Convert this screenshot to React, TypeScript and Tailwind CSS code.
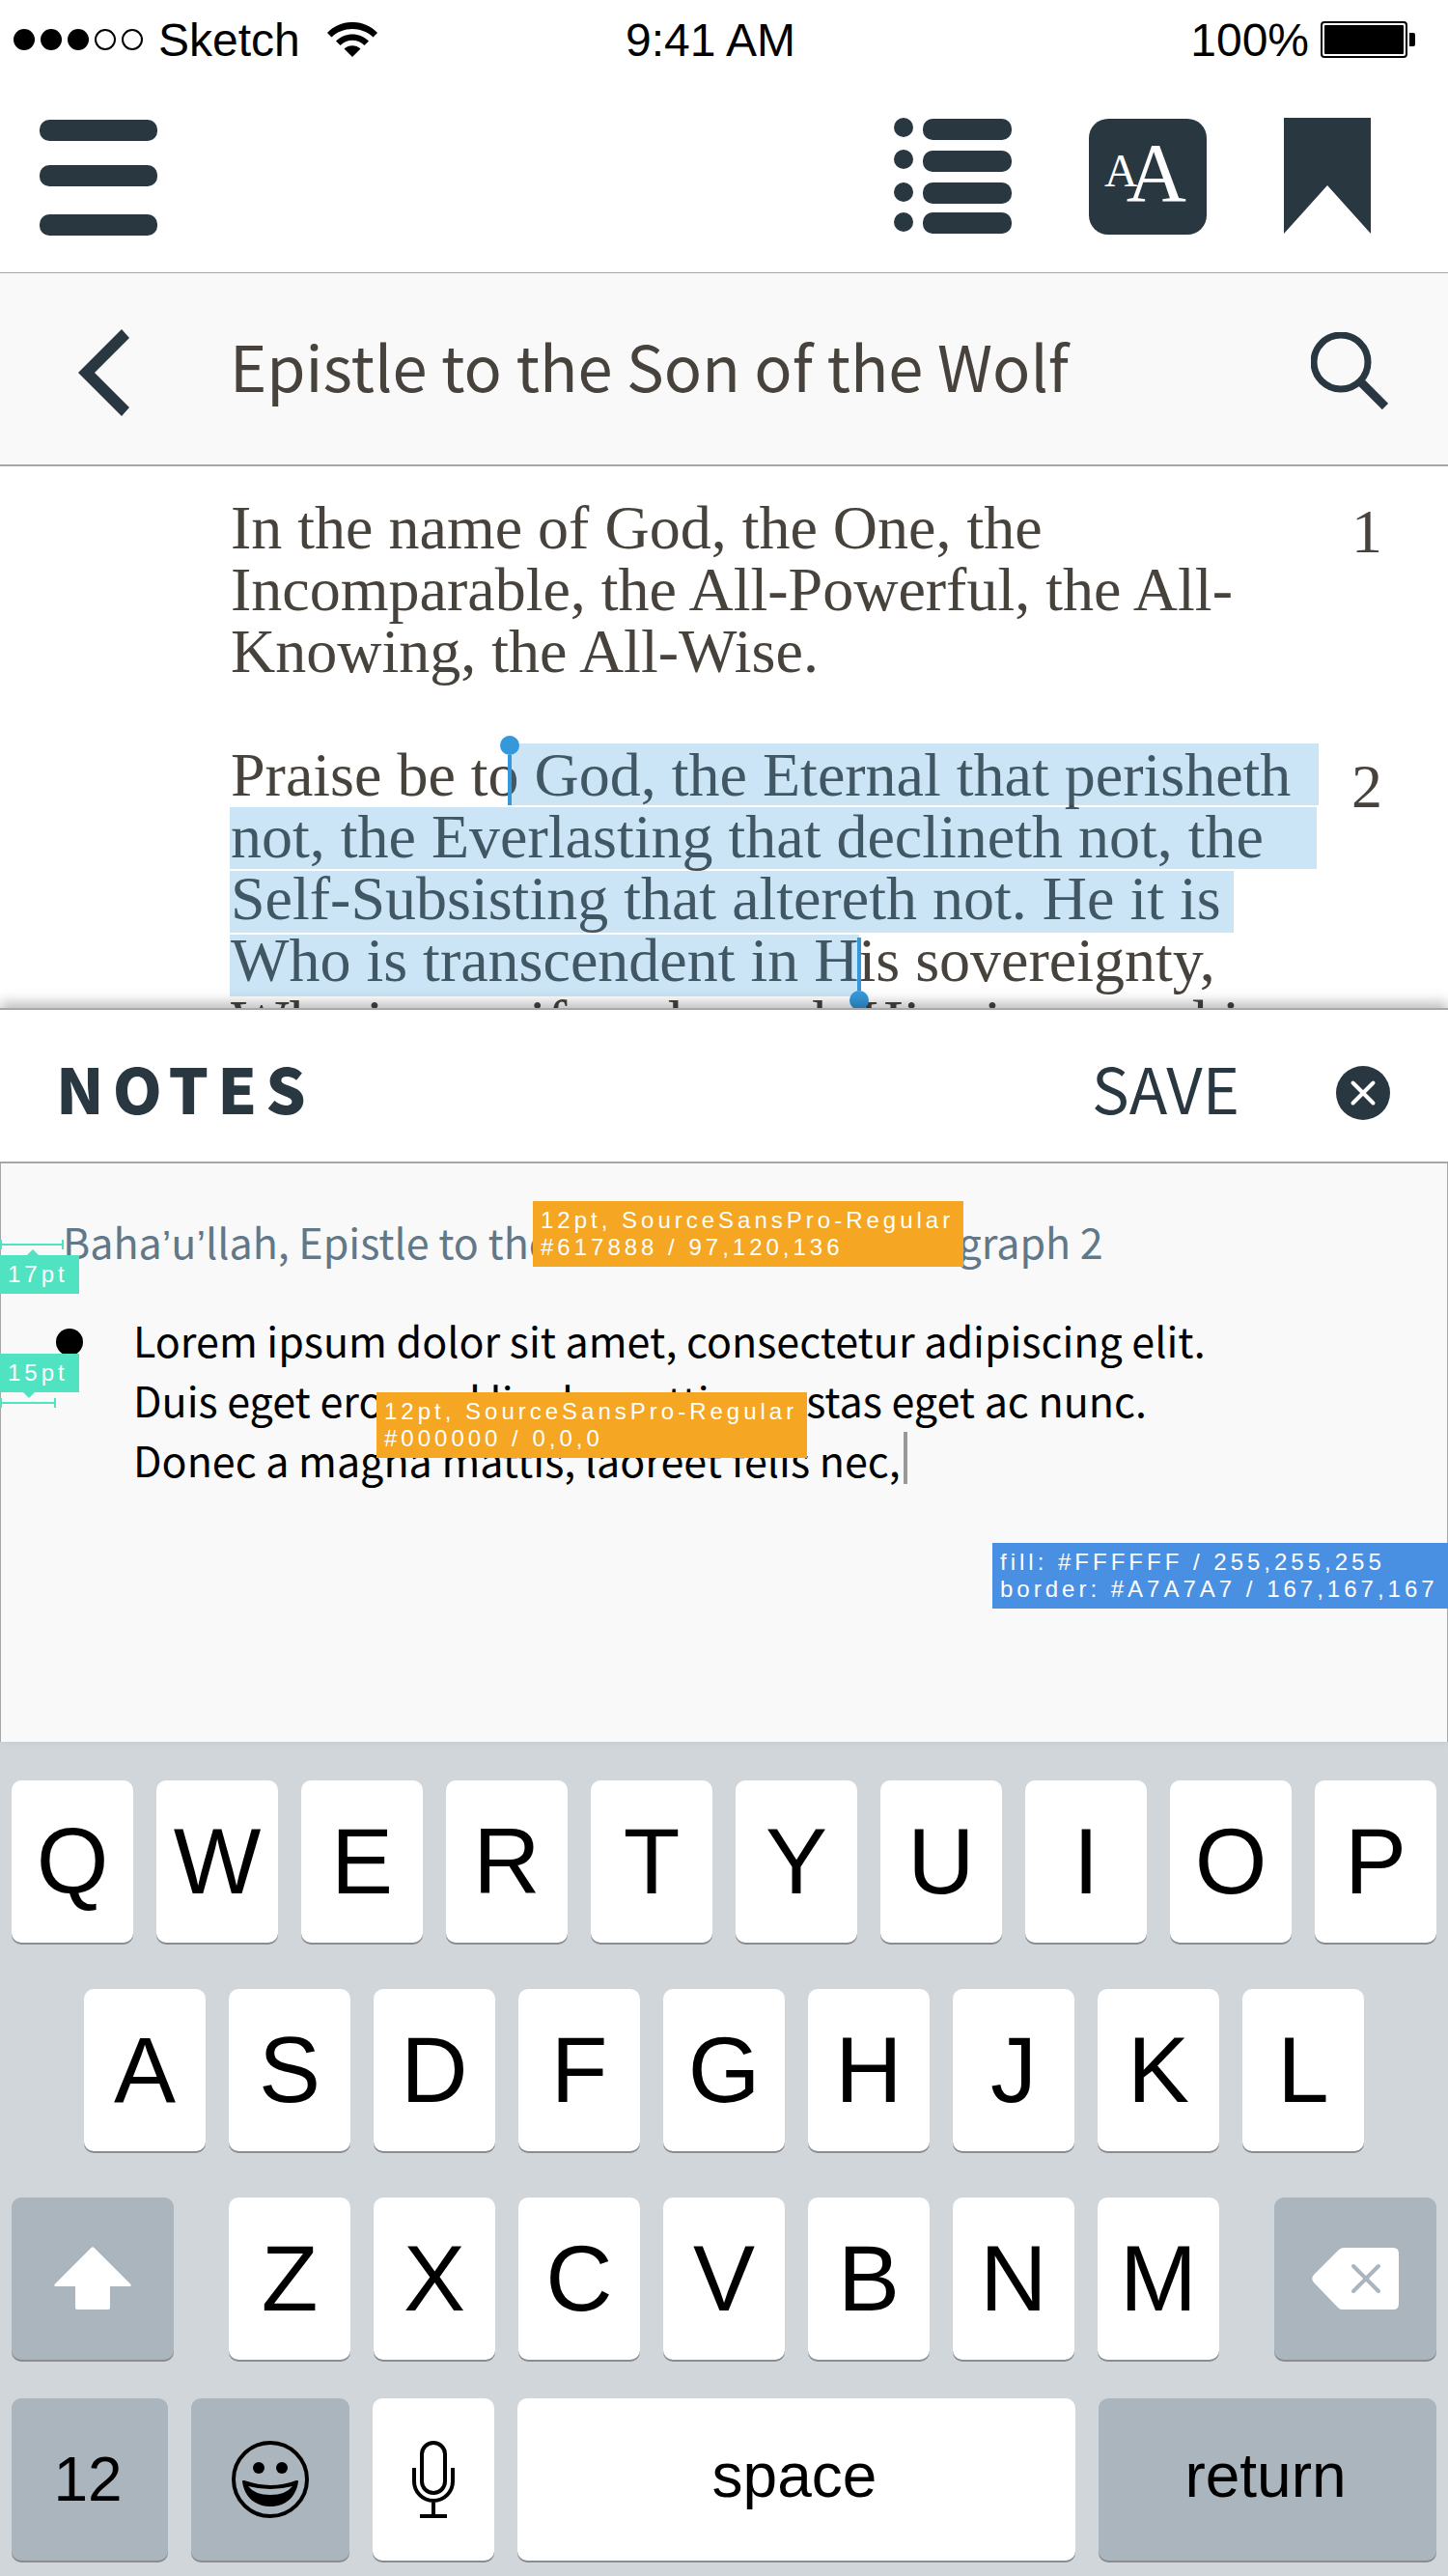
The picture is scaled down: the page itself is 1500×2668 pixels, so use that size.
import type { ReactNode } from "react";

const INK = "#293740";
const SANS = "font-['Liberation_Sans',Arial,sans-serif]";
const SOURCE = "font-['Noto_Sans_CJK_SC','Source_Sans_Pro',sans-serif]";
const SERIF = "font-['Liberation_Serif',serif]";

function StatusBar() {
  return (
    <div className={`${SANS} grid h-[82px] grid-cols-3 items-center pr-[34px] pl-[14px] text-[48px] leading-[56px] text-black`}>
      <div className="flex items-center">
        <svg width="134" height="22" viewBox="0 0 134 22" aria-label="Signal strength">
          <circle cx="11" cy="11" r="11" />
          <circle cx="39" cy="11" r="11" />
          <circle cx="67" cy="11" r="11" />
          <circle cx="95" cy="11" r="10" fill="none" stroke="#000" strokeWidth="2" />
          <circle cx="123" cy="11" r="10" fill="none" stroke="#000" strokeWidth="2" />
        </svg>
        <span className="ml-4 pt-[2px]">Sketch</span>
        <svg className="ml-7" width="52" height="36" viewBox="0 0 52 36" aria-label="Wi-Fi">
          <path d="M0 11C14-3.700 38-3.700 52 11L47.500 15.500C36 4 16 4 4.500 15.500Z" />
          <path d="M9 19.500C18.500 10 33.500 10 43 19.500L38.500 24C31.500 17 20.500 17 13.500 24Z" />
          <path d="M17.500 27.500C22 23 30 23 34.500 27.500L26 36Z" />
        </svg>
      </div>
      <div className="pt-[2px] pr-2 text-center">9:41 AM</div>
      <div className="flex items-center justify-end gap-3">
        <span className="pt-[2px]">100%</span>
        <svg width="98" height="38" viewBox="0 0 98 38" aria-label="Battery">
          <rect x="1" y="1" width="88" height="36" rx="3" fill="none" stroke="#000" strokeWidth="2" />
          <rect x="4" y="4" width="82" height="30" rx="1" />
          <path d="M92 12h4q2 0 2 2v10q0 2-2 2h-4z" />
        </svg>
      </div>
    </div>
  );
}

function NavBar() {
  return (
    <nav className="flex h-[201px] items-center border-b border-[#a7a7a7] pr-20 pl-[41px]">
      <button aria-label="Menu" className="mr-auto pt-1">
        <svg width="122" height="120" viewBox="0 0 122 120" fill={INK}>
          <rect y="0" width="122" height="22" rx="10" />
          <rect y="47" width="122" height="22" rx="10" />
          <rect y="98" width="122" height="22" rx="10" />
        </svg>
      </button>
      <div className="flex items-center gap-20">
        <button aria-label="Contents">
          <svg width="122" height="120" viewBox="0 0 122 120" fill={INK}>
            <circle cx="10" cy="10" r="10" />
            <circle cx="10" cy="43" r="10" />
            <circle cx="10" cy="77" r="10" />
            <circle cx="10" cy="108" r="10" />
            <rect x="30" y="1" width="92" height="22" rx="10" />
            <rect x="30" y="34" width="92" height="22" rx="10" />
            <rect x="30" y="67" width="92" height="22" rx="10" />
            <rect x="30" y="98" width="92" height="22" rx="10" />
          </svg>
        </button>
        <button
          aria-label="Text size"
          className={`${SERIF} mt-[2px] flex h-[120px] w-[122px] items-center rounded-[20px] bg-[#293740] pb-2 pl-4 text-white`}
        >
          <span className="pb-1 text-[48px] leading-none">A</span>
          <span className="-ml-3 text-[86px] leading-none">A</span>
        </button>
        <button aria-label="Bookmark">
          <svg width="90" height="120" viewBox="0 0 90 120" fill={INK}>
            <path d="M0 0H90V120L45 70L0 120Z" />
          </svg>
        </button>
      </div>
    </nav>
  );
}

function TitleBar() {
  return (
    <header className="flex h-[200px] items-center border-b-2 border-[#a7a7a7] bg-[#f9f9f9] pr-[62px] pl-[81px]">
      <button aria-label="Back" className="pt-2">
        <svg width="53" height="90" viewBox="0 0 53 90" fill={INK}>
          <path d="M45 0L53 9L17 45L53 81L45 90L0 45Z" />
        </svg>
      </button>
      <h1 className={`${SOURCE} ml-[104px] flex-1 pb-2 text-[65px] leading-[92px] text-[#47423c]`}>
        Epistle to the Son of the Wolf
      </h1>
      <button aria-label="Search" className="pt-1">
        <svg width="80" height="80" viewBox="0 0 80 80" fill="none" stroke={INK}>
          <circle cx="31" cy="31" r="28" strokeWidth="7" />
          <path d="M50 50L77 77" strokeWidth="9" />
        </svg>
      </button>
    </header>
  );
}

function Verse({ number, numberClass, children }: { number: number; numberClass: string; children: ReactNode }) {
  return (
    <div className="flex justify-between pr-[68px] pl-[239px]">
      <div className="relative whitespace-nowrap">{children}</div>
      <span className={numberClass}>{number}</span>
    </div>
  );
}

function Selection() {
  return (
    <div aria-hidden="true" className="absolute -top-px -left-px">
      <div className="flex flex-col gap-[2px] *:h-[64px] *:bg-[#3498db]/25">
        <div className="ml-[290px] w-[838px]" />
        <div className="w-[1126px]" />
        <div className="w-[1040px]" />
        <div className="w-[652px]" />
      </div>
      <div className="absolute -top-2 left-[280px] flex flex-col items-center">
        <div className="size-5 rounded-full bg-[#3498db]" />
        <div className="h-[52px] w-1 bg-[#3498db]" />
      </div>
      <div className="absolute top-[201px] left-[642px] flex flex-col items-center">
        <div className="h-[55px] w-1 bg-[#3498db]" />
        <div className="size-5 rounded-full bg-[#3498db]" />
      </div>
    </div>
  );
}

function Reader() {
  return (
    <article className={`${SERIF} flex h-[561px] flex-col gap-16 overflow-hidden pt-8 text-[64px] leading-[64px] text-[#47423c]`}>
      <Verse number={1} numberClass="pt-1">
        <p>
          In the name of God, the One, the
          <br />
          Incomparable, the All-Powerful, the All-
          <br />
          Knowing, the All-Wise.
        </p>
      </Verse>
      <Verse number={2} numberClass="pt-3">
        <p>
          Praise be to God, the Eternal that perisheth
          <br />
          not, the Everlasting that declineth not, the
          <br />
          Self-Subsisting that altereth not. He it is
          <br />
          Who is transcendent in His sovereignty,
          <br />
          Who is manifest through His signs, and is
        </p>
        <Selection />
      </Verse>
    </article>
  );
}

function SpecBadge({ className, lines }: { className: string; lines: string[] }) {
  return (
    <div className={`${SANS} absolute h-[68px] pt-[6px] pl-2 text-[24px] leading-[28px] tracking-[4px] whitespace-nowrap text-white ${className}`}>
      {lines.map((line) => (
        <div key={line}>{line}</div>
      ))}
    </div>
  );
}

function Measure({ width }: { width: string }) {
  return (
    <div className={`flex h-[10px] items-center border-x-2 border-[#50e3c2] ${width}`}>
      <div className="h-[2px] w-full bg-[#50e3c2]" />
    </div>
  );
}

function SizeTag({ children }: { children: string }) {
  return (
    <div className={`${SANS} h-10 w-[82px] bg-[#50e3c2] pl-2 text-[24px] leading-[40px] tracking-[4px] text-white`}>{children}</div>
  );
}

function Apostrophe() {
  return <span className="font-['Liberation_Sans',sans-serif] leading-none">’</span>;
}

function Notes() {
  return (
    <section className="relative border-t-2 border-[#a7a7a7] bg-white shadow-[0_-6px_12px_rgba(0,0,0,0.25)]">
      <div className={`${SOURCE} flex h-[159px] items-center border-b-2 border-[#a7a7a7] pt-[2px] pr-[60px] pl-[58px] text-[65px] leading-[92px] text-[#293740]`}>
        <h2 className="mr-auto font-black tracking-[9px]">NOTES</h2>
        <button>SAVE</button>
        <button aria-label="Close" className="ml-[100px] pt-3">
          <svg width="56" height="56" viewBox="0 0 56 56">
            <circle cx="28" cy="28" r="28" fill={INK} />
            <path d="M17.500 17.500L38.500 38.500M38.500 17.500L17.500 38.500" stroke="#fff" strokeWidth="4" strokeLinecap="round" />
          </svg>
        </button>
      </div>

      <div className="relative">
        <div className={`${SOURCE} h-[599px] border-x border-[#a7a7a7] bg-[#f9f9f9] pt-[49px] text-[43px] leading-[62px]`}>
          <p className="h-[62px] pl-16 whitespace-nowrap text-[#617888]">
            Baha
            <Apostrophe />u<Apostrophe />
            llah, Epistle to the Son of the Wolf, Paragraph 2
          </p>
          <div className="relative mt-10 flex pl-[57px]">
            <div className="mt-5 size-7 shrink-0 rounded-full bg-black" />
            <textarea
              aria-label="Note text"
              rows={3}
              className="ml-[52px] flex-1 resize-none overflow-hidden bg-transparent text-black outline-none"
              defaultValue={
                "Lorem ipsum dolor sit amet, consectetur adipiscing elit.\nDuis eget eros sed ligula mattis egestas eget ac nunc.\nDonec a magna mattis, laoreet felis nec,"
              }
            />
            <div aria-hidden="true" className="absolute top-[127px] left-[935px] h-[54px] w-1 bg-[#999]" />
          </div>
        </div>

        <SpecBadge className="top-[39px] left-[552px] w-[446px] bg-[#f5a623]" lines={["12pt, SourceSansPro-Regular", "#617888 / 97,120,136"]} />
        <SpecBadge className="top-[237px] left-[390px] w-[446px] bg-[#f5a623]" lines={["12pt, SourceSansPro-Regular", "#000000 / 0,0,0"]} />
        <SpecBadge className="top-[393px] right-0 w-[472px] bg-[#4a90e2]" lines={["fill: #FFFFFF / 255,255,255", "border: #A7A7A7 / 167,167,167"]} />

        <div className="absolute top-[79px] left-0">
          <Measure width="w-[66px]" />
          <div className="ml-7 size-0 border-x-[6px] border-b-[6px] border-x-transparent border-b-[#50e3c2]" />
          <SizeTag>17pt</SizeTag>
        </div>
        <div className="absolute top-[197px] left-0">
          <SizeTag>15pt</SizeTag>
          <div className="ml-6 size-0 border-x-[6px] border-t-[6px] border-x-transparent border-t-[#50e3c2]" />
          <Measure width="w-[58px]" />
        </div>
      </div>
    </section>
  );
}

function Key({ children, label, className = "flex-1 bg-white text-[96px]" }: { children: ReactNode; label?: string; className?: string }) {
  return (
    <button
      aria-label={label}
      className={`flex h-[168px] items-center justify-center rounded-[10px] leading-none shadow-[0_2px_0_#898c90] ${className}`}
    >
      {children}
    </button>
  );
}

function Letters({ keys }: { keys: string }) {
  return (
    <>
      {keys.split("").map((k) => (
        <Key key={k}>{k}</Key>
      ))}
    </>
  );
}

function Keyboard() {
  return (
    <section aria-label="Keyboard" className={`${SANS} bg-[#d1d6da] px-3 pt-10 pb-4 text-black`}>
      <div className="flex gap-6">
        <Letters keys="QWERTYUIOP" />
      </div>
      <div className="mt-12 flex gap-6 px-[75px]">
        <Letters keys="ASDFGHJKL" />
      </div>
      <div className="mt-12 flex gap-[57px]">
        <Key label="Shift" className="w-[168px] bg-[#abb5be]">
          <svg width="80" height="66" viewBox="0 0 80 66" fill="#fff">
            <path d="M38.500 1Q40-.500 41.500 1L79 38.500Q81 41 78 41H58V63Q58 65 56 65H24Q22 65 22 63V41H2Q-1 41 1 38.500Z" />
          </svg>
        </Key>
        <div className="flex flex-1 gap-6">
          <Letters keys="ZXCVBNM" />
        </div>
        <Key label="Delete" className="w-[168px] bg-[#abb5be]">
          <svg width="90" height="64" viewBox="0 0 90 64">
            <path d="M84 0Q90 0 90 6V58Q90 64 84 64H31Q29 64 27 62L2 36Q-1.500 32 2 28L28 2Q30 0 34 0Z" fill="#fff" />
            <path d="M43 19L69 45M69 19L43 45" stroke="#abb5be" strokeWidth="4" strokeLinecap="round" />
          </svg>
        </Key>
      </div>
      <div className="mt-10 flex gap-6 text-[64px]">
        <Key className="w-[162px] bg-[#abb5be] pr-1">12</Key>
        <Key label="Emoji" className="w-[164px] bg-[#abb5be]">
          <svg width="80" height="80" viewBox="0 0 80 80">
            <circle cx="40" cy="40" r="38" fill="none" stroke="#000" strokeWidth="4" />
            <ellipse cx="28" cy="28" rx="6" ry="6" />
            <ellipse cx="52" cy="28" rx="6" ry="6" />
            <path
              fillRule="evenodd"
              d="M11 42Q11 40.500 13 41Q40 51 67 41Q69 40.500 69 42C67 58 56 68 40 68C24 68 13 58 11 42ZM17 47Q24 56 40 56Q56 56 63 47Q40 53 17 47Z"
            />
          </svg>
        </Key>
        <Key label="Dictate" className="w-[126px] bg-white">
          <svg width="44" height="80" viewBox="0 0 44 80" fill="none" stroke="#000" strokeWidth="4">
            <rect x="10" y="2" width="24" height="52" rx="12" />
            <path d="M2 28V42A20 20 0 0 0 42 42V28M22 62V77M8 78H36" />
          </svg>
        </Key>
        <Key className="flex-1 bg-white pr-1 pb-2">space</Key>
        <Key className="w-[350px] bg-[#abb5be] pr-1 pb-2">return</Key>
      </div>
    </section>
  );
}

export default function App() {
  return (
    <main className="w-full overflow-hidden bg-white">
      <StatusBar />
      <NavBar />
      <TitleBar />
      <Reader />
      <Notes />
      <Keyboard />
    </main>
  );
}
